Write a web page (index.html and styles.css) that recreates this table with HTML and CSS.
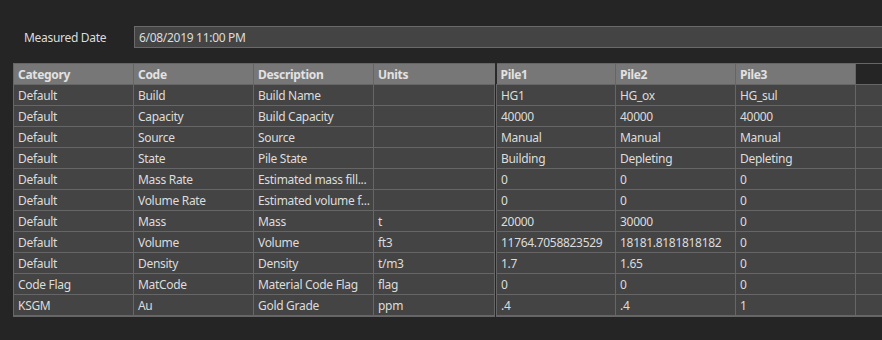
FILE: index.html
```html
<!DOCTYPE html>
<html lang="en">
<head>
    <meta charset="UTF-8">
    <title>Stockpile Properties</title>
    <link rel="stylesheet" href="styles.css">
</head>
<body>
    <div class="date-row">
        <label class="date-label" for="measuredDate">Measured Date</label>
        <input class="date-input" id="measuredDate" type="text" value="6/08/2019 11:00 PM">
    </div>

    <table class="grid">
        <colgroup>
            <col class="c-fixed"><col class="c-fixed"><col class="c-fixed"><col class="c-units">
            <col class="c-pile"><col class="c-pile"><col class="c-pile"><col class="c-fill">
        </colgroup>
        <thead>
            <tr>
                <th>Category</th>
                <th>Code</th>
                <th>Description</th>
                <th>Units</th>
                <th class="frozen">Pile1</th>
                <th>Pile2</th>
                <th>Pile3</th>
                <th class="filler"></th>
            </tr>
        </thead>
        <tbody>
            <tr><td>Default</td><td>Build</td><td>Build Name</td><td></td><td class="frozen">HG1</td><td>HG_ox</td><td>HG_sul</td><td></td></tr>
            <tr><td>Default</td><td>Capacity</td><td>Build Capacity</td><td></td><td class="frozen">40000</td><td>40000</td><td>40000</td><td></td></tr>
            <tr><td>Default</td><td>Source</td><td>Source</td><td></td><td class="frozen">Manual</td><td>Manual</td><td>Manual</td><td></td></tr>
            <tr><td>Default</td><td>State</td><td>Pile State</td><td></td><td class="frozen">Building</td><td>Depleting</td><td>Depleting</td><td></td></tr>
            <tr><td>Default</td><td>Mass Rate</td><td title="Estimated mass fill rate">Estimated mass fill...</td><td></td><td class="frozen">0</td><td>0</td><td>0</td><td></td></tr>
            <tr><td>Default</td><td>Volume Rate</td><td title="Estimated volume fill rate">Estimated volume f...</td><td></td><td class="frozen">0</td><td>0</td><td>0</td><td></td></tr>
            <tr><td>Default</td><td>Mass</td><td>Mass</td><td>t</td><td class="frozen">20000</td><td>30000</td><td>0</td><td></td></tr>
            <tr><td>Default</td><td>Volume</td><td>Volume</td><td>ft3</td><td class="frozen">11764.7058823529</td><td>18181.8181818182</td><td>0</td><td></td></tr>
            <tr><td>Default</td><td>Density</td><td>Density</td><td>t/m3</td><td class="frozen">1.7</td><td>1.65</td><td>0</td><td></td></tr>
            <tr><td>Code Flag</td><td>MatCode</td><td>Material Code Flag</td><td>flag</td><td class="frozen">0</td><td>0</td><td>0</td><td></td></tr>
            <tr><td>KSGM</td><td>Au</td><td>Gold Grade</td><td>ppm</td><td class="frozen">.4</td><td>.4</td><td>1</td><td></td></tr>
        </tbody>
    </table>
</body>
</html>
```

FILE: styles.css
```css
html, body {
    margin: 0;
    background-color: #252525;
    overflow: hidden;
}
body {
    font-family: "Noto Sans", "Open Sans", sans-serif;
    font-size: 12px;
    letter-spacing: -0.3px;
    color: #dcdcdc;
    padding: 26px 0 0 13px;
}
.date-row {
    display: flex;
    align-items: center;
    height: 22px;
}
.date-label {
    width: 121px;
    padding-left: 11px;
    box-sizing: border-box;
}
.date-input {
    flex: 1;
    height: 22px;
    box-sizing: border-box;
    margin: 0 -10px 0 0;
    padding: 0 4px;
    border: 1px solid #6a6a6a;
    background-color: #444;
    color: #dcdcdc;
    font-family: inherit;
    font-size: 12px;
    letter-spacing: -0.3px;
    outline: none;
}
.grid {
    margin-top: 15px;
    border-collapse: collapse;
    table-layout: fixed;
    width: 900px;
}
.c-fixed { width: 120px; }
.c-units { width: 122px; }
.c-pile { width: 120px; }
.c-fill { width: 58px; }
.grid th, .grid td {
    height: 21px;
    padding: 1px 0 0 4px;
    border: 1px solid #666;
    text-align: left;
    white-space: nowrap;
    overflow: hidden;
    box-sizing: border-box;
}
.grid th {
    background-color: #777;
    color: #e2e2e2;
    font-weight: bold;
}
.grid th.filler {
    background-color: #252525;
    border-right: none;
}
.grid td {
    background-color: #444;
}
.grid th.frozen {
    border-left: 2px solid #2a2a2a;
}
.grid td.frozen {
    border-left: 3px double #666;
}
.grid tbody tr:last-child td {
    border-bottom: 2px solid #666;
}
```
